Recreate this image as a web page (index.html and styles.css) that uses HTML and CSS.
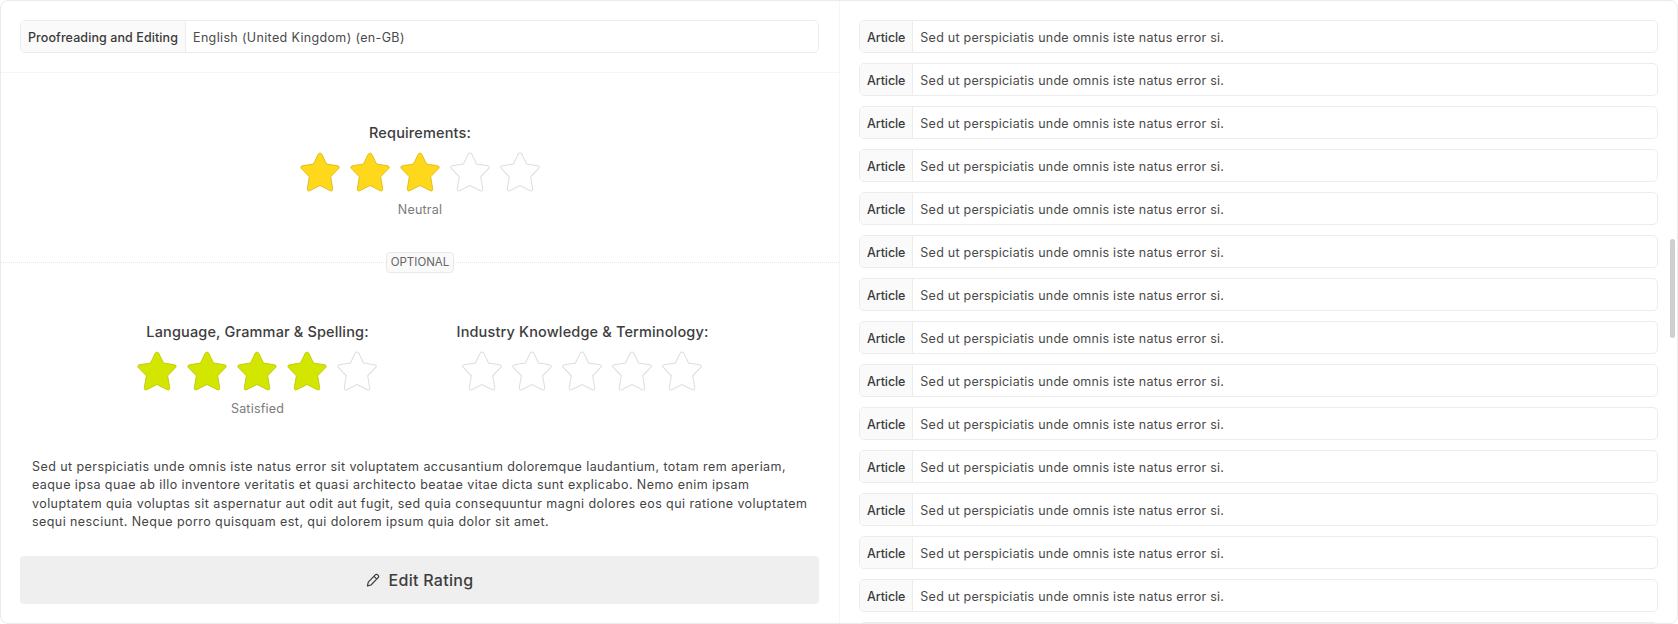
FILE: index.html
```html
<!DOCTYPE html>
<html lang="en">
<head>
<meta charset="utf-8">
<title>Rating</title>
<link rel="stylesheet" href="styles.css">
</head>
<body>
<svg class="defs" width="0" height="0" aria-hidden="true">
  <symbol id="star" viewBox="-.25 -.25 38.5 38.5">
    <path d="M17.3 1.8Q19-.4 20.7 1.8L25.3 11.3 36 13Q38.4 13.6 37 15.6L29.3 23.6 31.2 35Q31.4 38 28.9 37L19 32 9.1 37Q6.6 38 6.8 35L8.7 23.6 1 15.6Q-.4 13.6 2 13L12.7 11.3Z"/>
  </symbol>
</svg>
<main class="card">
  <section class="left">
    <div class="top">
      <div class="field"><span class="field-label">Proofreading and Editing</span><span class="field-value">English (United Kingdom) (en-GB)</span></div>
    </div>
    <div class="rating-single">
      <div class="rating">
        <h3>Requirements:</h3>
        <div class="stars gold">
          <svg class="on"><use href="#star"/></svg><svg class="on"><use href="#star"/></svg><svg class="on"><use href="#star"/></svg><svg><use href="#star"/></svg><svg><use href="#star"/></svg>
        </div>
        <p class="verdict">Neutral</p>
      </div>
    </div>
    <div class="divider"><span class="line"></span><span class="badge">OPTIONAL</span><span class="line"></span></div>
    <div class="rating-pair">
      <div class="rating">
        <h3>Language, Grammar &amp; Spelling:</h3>
        <div class="stars lime">
          <svg class="on"><use href="#star"/></svg><svg class="on"><use href="#star"/></svg><svg class="on"><use href="#star"/></svg><svg class="on"><use href="#star"/></svg><svg><use href="#star"/></svg>
        </div>
        <p class="verdict">Satisfied</p>
      </div>
      <div class="rating">
        <h3>Industry Knowledge &amp; Terminology:</h3>
        <div class="stars">
          <svg><use href="#star"/></svg><svg><use href="#star"/></svg><svg><use href="#star"/></svg><svg><use href="#star"/></svg><svg><use href="#star"/></svg>
        </div>
      </div>
    </div>
    <p class="comment">Sed ut perspiciatis unde omnis iste natus error sit voluptatem accusantium doloremque laudantium, totam rem aperiam, eaque ipsa quae ab illo inventore veritatis et quasi architecto beatae vitae dicta sunt explicabo. Nemo enim ipsam voluptatem quia voluptas sit aspernatur aut odit aut fugit, sed quia consequuntur magni dolores eos qui ratione voluptatem sequi nesciunt. Neque porro quisquam est, qui dolorem ipsum quia dolor sit amet.</p>
    <button class="edit" type="button">
      <svg viewBox="0 0 14 14" width="14" height="14"><path d="M9.3 1.9a1.7 1.7 0 0 1 2.5 0l.3.3a1.7 1.7 0 0 1 0 2.5L5 12l-3.6.9.9-3.7ZM8 3.3l2.8 2.8"/></svg>
      <span>Edit Rating</span>
    </button>
  </section>
  <section class="right">
    <div class="field"><span class="field-label">Article</span><span class="field-value">Sed ut perspiciatis unde omnis iste natus error si.</span></div>
    <div class="field"><span class="field-label">Article</span><span class="field-value">Sed ut perspiciatis unde omnis iste natus error si.</span></div>
    <div class="field"><span class="field-label">Article</span><span class="field-value">Sed ut perspiciatis unde omnis iste natus error si.</span></div>
    <div class="field"><span class="field-label">Article</span><span class="field-value">Sed ut perspiciatis unde omnis iste natus error si.</span></div>
    <div class="field"><span class="field-label">Article</span><span class="field-value">Sed ut perspiciatis unde omnis iste natus error si.</span></div>
    <div class="field"><span class="field-label">Article</span><span class="field-value">Sed ut perspiciatis unde omnis iste natus error si.</span></div>
    <div class="field"><span class="field-label">Article</span><span class="field-value">Sed ut perspiciatis unde omnis iste natus error si.</span></div>
    <div class="field"><span class="field-label">Article</span><span class="field-value">Sed ut perspiciatis unde omnis iste natus error si.</span></div>
    <div class="field"><span class="field-label">Article</span><span class="field-value">Sed ut perspiciatis unde omnis iste natus error si.</span></div>
    <div class="field"><span class="field-label">Article</span><span class="field-value">Sed ut perspiciatis unde omnis iste natus error si.</span></div>
    <div class="field"><span class="field-label">Article</span><span class="field-value">Sed ut perspiciatis unde omnis iste natus error si.</span></div>
    <div class="field"><span class="field-label">Article</span><span class="field-value">Sed ut perspiciatis unde omnis iste natus error si.</span></div>
    <div class="field"><span class="field-label">Article</span><span class="field-value">Sed ut perspiciatis unde omnis iste natus error si.</span></div>
    <div class="field"><span class="field-label">Article</span><span class="field-value">Sed ut perspiciatis unde omnis iste natus error si.</span></div>
    <div class="field field-clipped"><span class="field-label"></span><span class="field-value"></span></div>
    <span class="scroll-thumb"></span>
  </section>
</main>
</body>
</html>
```
FILE: styles.css
```css
* { box-sizing: border-box; }
html, body { margin: 0; height: 100%; background: #fff; }
body { font-family: Inter, "Liberation Sans", sans-serif; color: #3a3a3a; overflow: hidden; }
.defs { position: absolute; }

.card {
  display: flex;
  width: 1678px;
  height: 624px;
  border: 1px solid #ebebeb;
  border-radius: 8px;
  overflow: hidden;
}

.left {
  flex: 0 0 839px;
  display: flex;
  flex-direction: column;
  border-right: 1px solid #f5f5f5;
}

.top {
  padding: 19px 20px 19px 19px;
  border-bottom: 1px solid #f5f5f5;
}

.field {
  display: flex;
  flex: 0 0 33px;
  height: 33px;
  border: 1px solid #ececec;
  border-radius: 5px;
  font-size: 12.5px;
  line-height: 33px;
  overflow: hidden;
}
.field-label {
  padding: 0 7px;
  font-weight: 500;
  background: #fafafa;
  border-right: 1px solid #ececec;
  color: #3a3a3a;
  letter-spacing: .09px;
}
.field-value { padding: 0 7px; letter-spacing: .25px; color: #4a4a4a; }
.top .field-value { letter-spacing: .35px; }
.right .field-label { padding: 0 7px 0 7px; letter-spacing: -.1px; }
.field-clipped .field-label { flex: 0 0 54px; }

.rating-single {
  display: flex;
  justify-content: center;
  padding-top: 49px;
  height: 179px;
}
.rating { display: flex; flex-direction: column; align-items: center; }
.rating h3 { margin: 0; font-size: 14.5px; line-height: 22px; font-weight: 500; color: #3d3d3d; letter-spacing: .15px; white-space: nowrap; }
.stars { display: flex; gap: 10px; margin-top: 8px; }
.stars svg { width: 40px; height: 40px; fill: #fff; stroke: #dedede; stroke-width: 1; }
.stars.gold svg.on { fill: #ffd81c; stroke: #d8b90c; stroke-width: .8; }
.stars.lime svg.on { fill: #d2e600; stroke: #b9c700; stroke-width: .8; }
.rating-pair .stars { margin-right: 2px; }
.verdict { margin: 9px 0 0; font-size: 12.5px; line-height: 18px; color: #7a7a7a; letter-spacing: .2px; }

.divider { display: flex; align-items: center; height: 21px; }
.line { flex: 1; border-top: 1px dotted #e6e6e6; }
.badge {
  padding: 0 4px;
  height: 21px;
  line-height: 19px;
  font-size: 11.5px;
  color: #666;
  background: #fafafa;
  border: 1px solid #e9e9e9;
  border-radius: 4px;
}

.rating-pair {
  display: grid;
  grid-template-columns: 250px 250px;
  justify-content: center;
  column-gap: 75px;
  padding-top: 48px;
  height: 185px;
}

.comment {
  margin: 0;
  padding: 0 25px 0 31px;
  font-size: 12.5px;
  line-height: 18.3px;
  color: #444;
  letter-spacing: .43px;
}

.edit {
  display: flex;
  align-items: center;
  justify-content: center;
  gap: 9px;
  flex: 0 0 48px;
  margin: 25px 20px 0 19px;
  border: 0;
  border-radius: 4px;
  background: #efefef;
  font-family: inherit;
  font-size: 16px;
  font-weight: 500;
  color: #3d3d3d;
  letter-spacing: .3px;
}
.edit svg { fill: none; stroke: #3d3d3d; stroke-width: 1.2; stroke-linejoin: round; }

.right {
  flex: 1;
  position: relative;
  display: flex;
  flex-direction: column;
  gap: 10px;
  padding: 19px 19px 0 19px;
  overflow: hidden;
}
.scroll-thumb {
  position: absolute;
  top: 238px;
  right: 2px;
  width: 5px;
  height: 99px;
  border-radius: 3px;
  background: #cfcfcf;
}
```
